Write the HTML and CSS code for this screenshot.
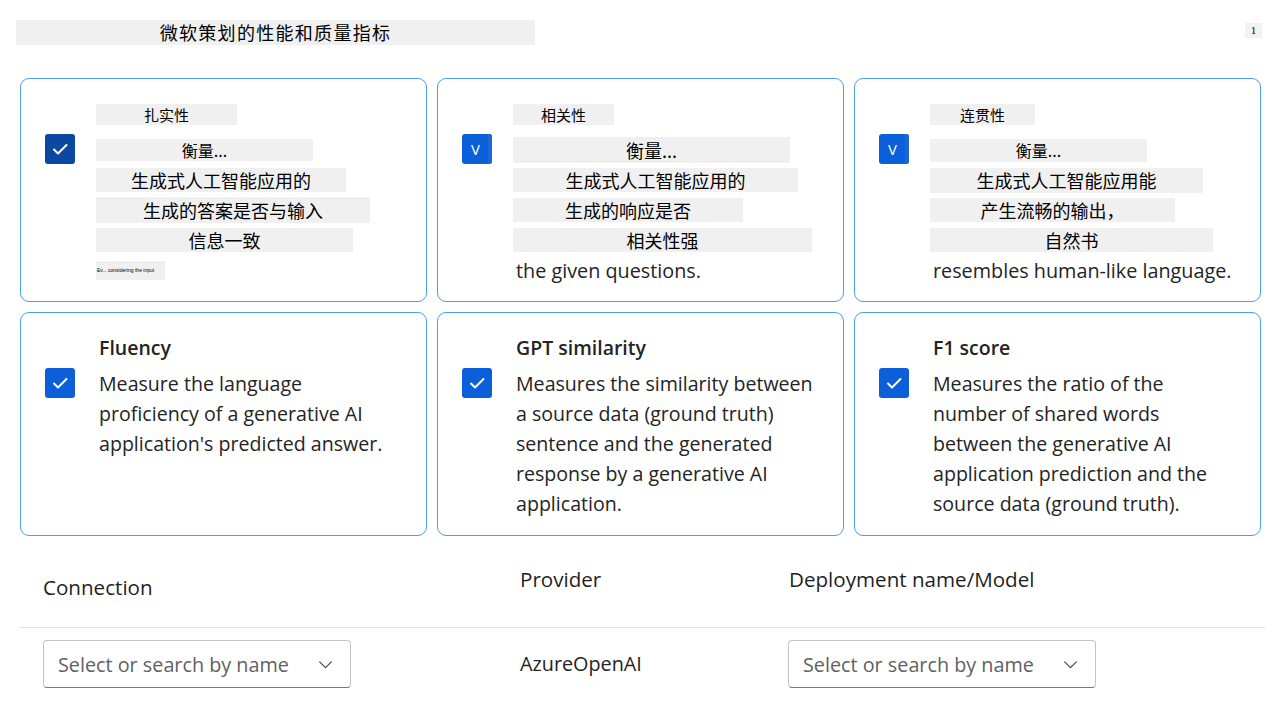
FILE: index.html
```html
<!DOCTYPE html>
<html lang="zh">
<head>
<meta charset="utf-8">
<title>Metrics</title>
<link rel="stylesheet" href="styles.css">
</head>
<body>
<div class="page">
  <div class="top">
    <div class="heading">微软策划的性能和质量指标</div>
    <div class="badge">1</div>
  </div>

  <div class="cards">
    <div class="card">
      <div class="cbcol"><span class="cb cb-dark"><svg viewBox="0 0 30 30" width="30" height="30"><path d="M9 15.5 L13 19.5 L21.5 11" fill="none" stroke="#fff" stroke-width="2" stroke-linecap="round" stroke-linejoin="round"/></svg></span></div>
      <div class="body">
        <div class="line t"><span class="ov ovt w141">扎实性</span></div>
        <div class="line"><span class="ov h22 w217 fs16">衡量...</span></div>
        <div class="line"><span class="ov h24 w250">生成式人工智能应用的</span></div>
        <div class="line"><span class="ov h26 w274">生成的答案是否与输入</span></div>
        <div class="line"><span class="ov h24 w257">信息一致</span></div>
        <div class="line"><span class="ov h19 w69 tiny">Ev... considering the input</span></div>
      </div>
    </div>

    <div class="card">
      <div class="cbcol"><span class="cb cb-v">V</span></div>
      <div class="body">
        <div class="line t"><span class="ov ovt w101">相关性</span></div>
        <div class="line"><span class="ov h26 w277 fs18">衡量...</span></div>
        <div class="line"><span class="ov h24 w285">生成式人工智能应用的</span></div>
        <div class="line"><span class="ov h24 w230">生成的响应是否</span></div>
        <div class="line"><span class="ov h24 w299">相关性强</span></div>
        <div class="line txt">the given questions.</div>
      </div>
    </div>

    <div class="card">
      <div class="cbcol"><span class="cb cb-v">V</span></div>
      <div class="body">
        <div class="line t"><span class="ov ovt w105">连贯性</span></div>
        <div class="line"><span class="ov h23 w217 fs16">衡量...</span></div>
        <div class="line"><span class="ov h25 w273">生成式人工智能应用能</span></div>
        <div class="line"><span class="ov h24 w245">产生流畅的输出，</span></div>
        <div class="line"><span class="ov h24 w283">自然书</span></div>
        <div class="line txt">resembles human-like language.</div>
      </div>
    </div>

    <div class="card">
      <div class="cbcol"><span class="cb"><svg viewBox="0 0 30 30" width="30" height="30"><path d="M9 15.5 L13 19.5 L21.5 11" fill="none" stroke="#fff" stroke-width="2" stroke-linecap="round" stroke-linejoin="round"/></svg></span></div>
      <div class="body">
        <div class="title">Fluency</div>
        <div class="desc">Measure the language<br>proficiency of a generative AI<br>application's predicted answer.</div>
      </div>
    </div>

    <div class="card">
      <div class="cbcol"><span class="cb"><svg viewBox="0 0 30 30" width="30" height="30"><path d="M9 15.5 L13 19.5 L21.5 11" fill="none" stroke="#fff" stroke-width="2" stroke-linecap="round" stroke-linejoin="round"/></svg></span></div>
      <div class="body">
        <div class="title">GPT similarity</div>
        <div class="desc">Measures the similarity between<br>a source data (ground truth)<br>sentence and the generated<br>response by a generative AI<br>application.</div>
      </div>
    </div>

    <div class="card">
      <div class="cbcol"><span class="cb"><svg viewBox="0 0 30 30" width="30" height="30"><path d="M9 15.5 L13 19.5 L21.5 11" fill="none" stroke="#fff" stroke-width="2" stroke-linecap="round" stroke-linejoin="round"/></svg></span></div>
      <div class="body">
        <div class="title">F1 score</div>
        <div class="desc">Measures the ratio of the<br>number of shared words<br>between the generative AI<br>application prediction and the<br>source data (ground truth).</div>
      </div>
    </div>
  </div>

  <div class="conn">
    <div class="conn-head">
      <div class="ch ch-conn">Connection</div>
      <div class="ch">Provider</div>
      <div class="ch">Deployment name/Model</div>
    </div>
    <div class="conn-row">
      <div class="cell"><div class="dd"><span class="ph">Select or search by name</span><svg class="chev" viewBox="0 0 16 16" width="17" height="17"><path d="M2.5 5.5 L8 11 L13.5 5.5" fill="none" stroke="#424242" stroke-width="1.1" stroke-linecap="round" stroke-linejoin="round"/></svg></div></div>
      <div class="cell prov">AzureOpenAI</div>
      <div class="cell"><div class="dd"><span class="ph">Select or search by name</span><svg class="chev" viewBox="0 0 16 16" width="17" height="17"><path d="M2.5 5.5 L8 11 L13.5 5.5" fill="none" stroke="#424242" stroke-width="1.1" stroke-linecap="round" stroke-linejoin="round"/></svg></div></div>
    </div>
  </div>
</div>
</body>
</html>
```

FILE: styles.css
```css
* { box-sizing: border-box; }
html, body { margin: 0; padding: 0; background: #fff; }
body {
  font-family: "Open Sans", "Noto Sans", "Noto Sans CJK SC", sans-serif;
  color: #242424;
  width: 1288px;
  height: 709px;
  overflow: hidden;
}
.page { padding: 20px 0 0 0; }

.top {
  display: flex;
  justify-content: space-between;
  align-items: flex-start;
  padding: 0 26px 0 16px;
  height: 58px;
}
.heading {
  width: 519px;
  height: 25px;
  background: #f0f0f0;
  color: #000;
  font-family: "Noto Sans CJK SC", sans-serif;
  font-size: 18px;
  line-height: 25px;
  text-align: center;
  letter-spacing: 1.3px;
}
.badge {
  margin-top: 3px;
  width: 17px;
  height: 15px;
  background: #f2f2f2;
  color: #000;
  font-family: "Liberation Serif", serif;
  font-size: 11px;
  line-height: 15px;
  text-align: center;
}

.cards {
  display: grid;
  grid-template-columns: repeat(3, 407px);
  grid-auto-rows: 224px;
  gap: 10px 10px;
  padding-left: 20px;
}
.card {
  border: 1px solid #4a9eee;
  border-radius: 9px;
  display: flex;
  padding: 20px 20px 0 24px;
}
.cbcol { width: 54px; flex: none; padding-top: 35px; }
.cb {
  display: block;
  width: 30px;
  height: 30px;
  border-radius: 3px;
  background: #0b5fd8;
}
.cb svg { display: block; }
.cb-dark { background: #0c47a2; }
.cb-v {
  color: #fff;
  font-family: "Open Sans", sans-serif;
  font-size: 15px;
  line-height: 30px;
  padding-left: 9px;
  box-shadow: inset -4px 0 0 #1c66d6;
}

.body { flex: 1; min-width: 0; }
.line { height: 30px; display: flex; align-items: center; }
.line.t { height: 30px; margin-bottom: 6px; }
.txt { font-size: 19.8px; color: #242424; white-space: nowrap; }
.ov {
  display: block;
  margin-left: -3px;
  background: #f0f0f0;
  color: #000;
  font-family: "Noto Sans CJK SC", sans-serif;
  font-size: 18px;
  text-align: center;
  white-space: nowrap;
  overflow: hidden;
}
.ovt { height: 21px; line-height: 21px; font-size: 15px; }
.fs16 { font-size: 16px; }
.fs18 { font-size: 18px; }
.h19 { height: 19px; line-height: 19px; }
.h22 { height: 22px; line-height: 22px; }
.h23 { height: 23px; line-height: 23px; }
.h24 { height: 24px; line-height: 24px; }
.h25 { height: 25px; line-height: 25px; }
.h26 { height: 26px; line-height: 26px; }
.tiny { font-family: "Liberation Sans", sans-serif; font-size: 5px; text-align: left; padding-left: 1px; }
.w69 { width: 69px; }
.w101 { width: 101px; }
.w105 { width: 105px; }
.w141 { width: 141px; }
.w217 { width: 217px; }
.w230 { width: 230px; }
.w245 { width: 245px; }
.w250 { width: 250px; }
.w257 { width: 257px; }
.w273 { width: 273px; }
.w274 { width: 274px; }
.w277 { width: 277px; }
.w283 { width: 283px; }
.w285 { width: 285px; }
.w299 { width: 299px; }

.title {
  font-size: 19.5px;
  font-weight: 600;
  line-height: 30px;
  margin-bottom: 6px;
  color: #242424;
}
.desc {
  font-size: 19.6px;
  line-height: 30px;
  color: #242424;
  white-space: nowrap;
}

.conn { margin: 0 23px 0 19px; padding-top: 16px; }
.conn-head {
  display: grid;
  grid-template-columns: 477px 269px 1fr;
  padding-left: 24px;
  height: 76px;
  border-bottom: 1px solid #e3e3e3;
}
.ch { font-size: 20.6px; color: #1f1f1f; line-height: 30px; padding-top: 12px; }
.ch-conn { padding-top: 20px; }
.conn-row {
  display: grid;
  grid-template-columns: 477px 268px 1fr;
  padding-left: 24px;
  padding-top: 12px;
}
.dd {
  width: 308px;
  height: 48px;
  border: 1px solid #c4c4c4;
  border-bottom-color: #7a7a7a;
  border-radius: 4px;
  display: flex;
  align-items: center;
  justify-content: space-between;
  padding: 0 16px 0 14px;
}
.ph { font-size: 19.8px; color: #616161; }
.chev { display: block; }
.prov { font-size: 19.8px; line-height: 48px; color: #242424; }
```
